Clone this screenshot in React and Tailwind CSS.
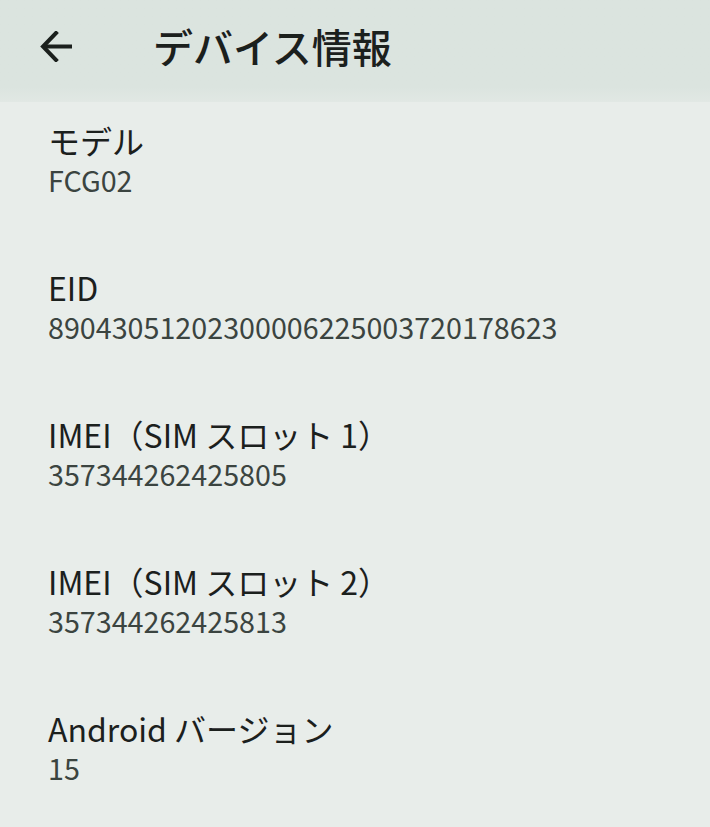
import React from "react";

const items = [
  ["モデル", "FCG02"],
  ["EID", "89043051202300006225003720178623"],
  ["IMEI（SIM スロット 1）", "357344262425805"],
  ["IMEI（SIM スロット 2）", "357344262425813"],
  ["Android バージョン", "15"],
];

export default function App() {
  return (
    <div
      className="w-[710px] h-[827px] overflow-hidden bg-[#e8edea] flex flex-col"
      style={{ fontFamily: '"Noto Sans CJK JP", "Noto Sans", sans-serif' }}
    >
      <div className="h-[102px] shrink-0 bg-gradient-to-b from-[#dbe4df] from-85% to-[#e1e8e4] flex items-center pb-[10px]">
        <div className="w-[153px] pl-[40px] flex items-center">
          <svg width="33" height="31" viewBox="0 0 33 31" fill="none">
            <path d="M16 2 L3 15.5 L16 29" stroke="#1b201d" strokeWidth="4" strokeLinecap="square" />
            <path d="M4 15.5 H32" stroke="#1b201d" strokeWidth="4" />
          </svg>
        </div>
        <div className="text-[40px] leading-none text-[#1b201d] font-medium">デバイス情報</div>
      </div>
      <div className="flex flex-col pl-[48px] pt-[17px]">
        {items.map(([t, v]) => (
          <div key={t} className="h-[147px] flex flex-col">
            <div className="text-[32px] leading-[42px] text-[#1b201d]">{t}</div>
            <div className="text-[28.7px] leading-[37px] text-[#3b4440]">{v}</div>
          </div>
        ))}
      </div>
    </div>
  );
}
